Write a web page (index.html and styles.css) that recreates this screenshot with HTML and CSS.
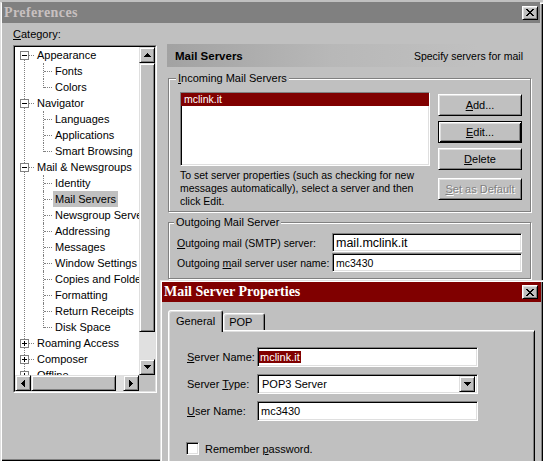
FILE: index.html
```html
<!DOCTYPE html>
<html lang="en">
<head>
    <meta charset="UTF-8">
    <title>Preferences</title>
    <link rel="stylesheet" href="styles.css">
</head>
<body>
    <div class="window">
        <!-- Title bar (inactive) -->
        <div class="titlebar inactive">
            <span class="title">Preferences</span>
            <span class="close-btn">
                <svg width="8" height="7" viewBox="0 0 8 7" shape-rendering="crispEdges"><path d="M0 0h2v1h-2z M6 0h2v1h-2z M1 1h2v1h-2z M5 1h2v1h-2z M2 2h4v1h-4z M3 3h2v1h-2z M2 4h4v1h-4z M1 5h2v1h-2z M5 5h2v1h-2z M0 6h2v1h-2z M6 6h2v1h-2z"/></svg>
            </span>
        </div>

        <div class="main">
            <!-- Category tree -->
            <div class="left-pane">
                <div class="cat-label"><u>C</u>ategory:</div>
                <div class="tree-box">
                    <div class="tree-inner">
                        <div class="tree-view">
                            <div class="tree">
                                <ul class="tree-list">
                                    <li>
                                        <div class="row"><i class="exp"></i><span class="lbl">Appearance</span></div>
                                        <ul class="kids">
                                            <li><span class="lbl">Fonts</span></li>
                                            <li><span class="lbl">Colors</span></li>
                                        </ul>
                                    </li>
                                    <li>
                                        <div class="row"><i class="exp"></i><span class="lbl">Navigator</span></div>
                                        <ul class="kids">
                                            <li><span class="lbl">Languages</span></li>
                                            <li><span class="lbl">Applications</span></li>
                                            <li><span class="lbl">Smart Browsing</span></li>
                                        </ul>
                                    </li>
                                    <li>
                                        <div class="row"><i class="exp"></i><span class="lbl">Mail &amp; Newsgroups</span></div>
                                        <ul class="kids">
                                            <li><span class="lbl">Identity</span></li>
                                            <li><span class="lbl selected">Mail Servers</span></li>
                                            <li><span class="lbl">Newsgroup Servers</span></li>
                                            <li><span class="lbl">Addressing</span></li>
                                            <li><span class="lbl">Messages</span></li>
                                            <li><span class="lbl">Window Settings</span></li>
                                            <li><span class="lbl">Copies and Folders</span></li>
                                            <li><span class="lbl">Formatting</span></li>
                                            <li><span class="lbl">Return Receipts</span></li>
                                            <li><span class="lbl">Disk Space</span></li>
                                        </ul>
                                    </li>
                                    <li><div class="row"><i class="exp plus"></i><span class="lbl">Roaming Access</span></div></li>
                                    <li><div class="row"><i class="exp plus"></i><span class="lbl">Composer</span></div></li>
                                    <li><div class="row"><i class="exp plus"></i><span class="lbl">Offline</span></div></li>
                                    <li><div class="row"><i class="exp plus"></i><span class="lbl">Advanced</span></div></li>
                                </ul>
                            </div>
                            <div class="vscroll">
                                <div class="sb-btn raised">
                                    <svg width="7" height="4" viewBox="0 0 7 4" shape-rendering="crispEdges"><path d="M3 0h1v1h1v1h1v1h1v1H0V3h1V2h1V1h1z"/></svg>
                                </div>
                                <div class="sb-thumb v raised"></div>
                                <div class="sb-track"></div>
                                <div class="sb-btn raised">
                                    <svg width="7" height="4" viewBox="0 0 7 4" shape-rendering="crispEdges"><path d="M0 0h7v1h-1v1h-1v1h-1v1h-1v-1h-1v-1h-1v-1h-1z"/></svg>
                                </div>
                            </div>
                        </div>
                        <div class="hscroll-row">
                            <div class="hscroll">
                                <div class="sb-btn raised">
                                    <svg width="4" height="7" viewBox="0 0 4 7" shape-rendering="crispEdges"><path d="M3 0h1v7h-1v-1h-1v-1h-1v-1h-1v-1h1v-1h1v-1h1z"/></svg>
                                </div>
                                <div class="sb-thumb h raised"></div>
                                <div class="sb-track"></div>
                                <div class="sb-btn raised">
                                    <svg width="4" height="7" viewBox="0 0 4 7" shape-rendering="crispEdges"><path d="M0 0h1v1h1v1h1v1h1v1h-1v1h-1v1h-1v1h-1z"/></svg>
                                </div>
                            </div>
                            <div class="sb-corner"></div>
                        </div>
                    </div>
                </div>
            </div>

            <!-- Mail servers panel -->
            <div class="right-pane">
                <div class="panel-head">
                    <b>Mail Servers</b>
                    <span>Specify servers for mail</span>
                </div>

                <fieldset class="group incoming">
                    <legend><u>I</u>ncoming Mail Servers</legend>
                    <div class="incoming-body">
                        <div class="list-col">
                            <div class="listbox">
                                <div class="list-item selected">mclink.it</div>
                            </div>
                            <p class="hint">To set server properties (such as checking for new<br>messages automatically), select a server and then<br>click Edit.</p>
                        </div>
                        <div class="btn-col">
                            <button class="btn"><u>A</u>dd...</button>
                            <button class="btn default"><u>E</u>dit...</button>
                            <button class="btn"><u>D</u>elete</button>
                            <button class="btn disabled set-default"><u>S</u>et as Default</button>
                        </div>
                    </div>
                </fieldset>

                <fieldset class="group outgoing">
                    <legend>Outgoing Mail Server</legend>
                    <div class="form-grid">
                        <label><u>O</u>utgoing mail (SMTP) server:</label>
                        <div class="field big">mail.mclink.it</div>
                        <label>Outgoing <u>m</u>ail server user name:</label>
                        <div class="field">mc3430</div>
                    </div>
                </fieldset>
            </div>
        </div>
    </div>

    <!-- Mail Server Properties dialog -->
    <div class="dialog">
        <div class="titlebar active">
            <span class="title">Mail Server Properties</span>
            <span class="close-btn">
                <svg width="8" height="7" viewBox="0 0 8 7" shape-rendering="crispEdges"><path d="M0 0h2v1h-2z M6 0h2v1h-2z M1 1h2v1h-2z M5 1h2v1h-2z M2 2h4v1h-4z M3 3h2v1h-2z M2 4h4v1h-4z M1 5h2v1h-2z M5 5h2v1h-2z M0 6h2v1h-2z M6 6h2v1h-2z"/></svg>
            </span>
        </div>
        <div class="dialog-body">
            <div class="tabs">
                <div class="tab active">General</div>
                <div class="tab pop">POP</div>
            </div>
            <div class="tab-panel">
                <div class="props-grid">
                    <label><u>S</u>erver Name:</label>
                    <div class="field name"><span class="hl">mclink.it</span></div>
                    <label>Server <u>T</u>ype:</label>
                    <div class="field select">
                        <span>POP3 Server</span>
                        <span class="drop-btn raised">
                            <svg width="7" height="4" viewBox="0 0 7 4" shape-rendering="crispEdges"><path d="M0 0h7v1h-1v1h-1v1h-1v1h-1v-1h-1v-1h-1v-1h-1z"/></svg>
                        </span>
                    </div>
                    <label><u>U</u>ser Name:</label>
                    <div class="field">mc3430</div>
                </div>
                <div class="check-row">
                    <span class="checkbox"></span>
                    <span>Remember <u>p</u>assword.</span>
                </div>
            </div>
        </div>
    </div>
</body>
</html>
```

FILE: styles.css
```css
* {
    margin: 0;
    padding: 0;
    box-sizing: border-box;
}

html, body {
    overflow: hidden;
}

body {
    width: 543px;
    height: 461px;
    position: relative;
    background-color: #c0c0c0;
    font-family: 'Liberation Sans', Arial, sans-serif;
    font-size: 10.5px;
    color: #000;
}

label {
    white-space: nowrap;
}

/* Shared 3D bits */
.raised {
    background-color: #c0c0c0;
    border: 1px solid;
    border-color: #dfdfdf #000 #000 #dfdfdf;
    box-shadow: inset 1px 1px #fff, inset -1px -1px #808080;
}

.window {
    width: 543px;
    height: 459px;
    box-shadow: inset 1px 1px #dfdfdf, inset 2px 2px #fff, inset -1px -1px #000, inset -2px -2px #808080;
}

/* Title bars */
.titlebar {
    display: flex;
    align-items: center;
    justify-content: space-between;
    height: 21px;
    margin: 2px 3px 0 2px;
    padding: 0 2px 0 2px;
    background-color: #808080;
}

.titlebar .title {
    font-family: 'Liberation Serif', serif;
    font-weight: bold;
    font-size: 14px;
    letter-spacing: 0.4px;
    color: #c8c0c0;
}

.close-btn {
    width: 16px;
    height: 14px;
    display: flex;
    align-items: center;
    justify-content: center;
    background-color: #c0c0c0;
    border: 1px solid;
    border-color: #fff #000 #000 #fff;
    box-shadow: inset 1px 1px #dfdfdf, inset -1px -1px #808080;
}

.main {
    display: flex;
    height: 436px;
}

/* Left pane - category tree */
.left-pane {
    width: 158px;
    padding: 4px 0 0 13px;
}

.cat-label {
    height: 14px;
    line-height: 14px;
    margin-bottom: 4px;
    font-size: 11px;
}

.tree-box {
    width: 144px;
    border: 1px solid;
    border-color: #808080 #fff #fff #808080;
}

.tree-inner {
    border: 1px solid;
    border-color: #000 #dfdfdf #dfdfdf #000;
}

.tree-view {
    display: flex;
    height: 328px;
}

.tree {
    width: 124px;
    overflow: hidden;
    background-color: #fff;
    white-space: nowrap;
    font-size: 11px;
}

.tree-list {
    list-style: none;
    position: relative;
}

/* dotted trunk line joining the top level boxes */
.tree-list::before {
    content: '';
    position: absolute;
    left: 9px;
    top: 8px;
    bottom: 0;
    border-left: 1px dotted #808080;
}

.row {
    display: flex;
    align-items: center;
    height: 16px;
    position: relative;
}

.row::after {
    content: '';
    position: absolute;
    left: 14px;
    top: 8px;
    width: 5px;
    border-top: 1px dotted #808080;
}

.exp {
    width: 9px;
    height: 9px;
    margin-left: 5px;
    border: 1px solid #808080;
    background-color: #fff;
    position: relative;
    z-index: 1;
}

.exp::before {
    content: '';
    position: absolute;
    left: 1px;
    top: 3px;
    width: 5px;
    height: 1px;
    background-color: #000;
}

.exp.plus::after {
    content: '';
    position: absolute;
    left: 3px;
    top: 1px;
    width: 1px;
    height: 5px;
    background-color: #000;
}

.lbl {
    padding: 0 2px;
    line-height: 16px;
}

.row .lbl {
    margin-left: 6px;
}

.lbl.selected {
    background-color: #c0c0c0;
}

.kids {
    list-style: none;
    padding-left: 28px;
}

.kids li {
    height: 16px;
    display: flex;
    align-items: center;
    padding-left: 10px;
    position: relative;
}

.kids li::before {
    content: '';
    position: absolute;
    left: 0;
    top: 0;
    height: 16px;
    border-left: 1px dotted #808080;
}

.kids li:last-child::before {
    height: 9px;
}

.kids li::after {
    content: '';
    position: absolute;
    left: 1px;
    top: 8px;
    width: 8px;
    border-top: 1px dotted #808080;
}

/* Scrollbars */
.vscroll {
    width: 16px;
    display: flex;
    flex-direction: column;
}

.sb-btn {
    width: 16px;
    height: 16px;
    flex: none;
    display: flex;
    align-items: center;
    justify-content: center;
}

.sb-thumb.v {
    height: 269px;
    flex: none;
}

.sb-thumb.h {
    width: 85px;
    flex: none;
}

.sb-track {
    flex: 1;
    background-color: #e0e0e0;
}

.hscroll-row {
    display: flex;
    height: 16px;
}

.hscroll {
    width: 124px;
    display: flex;
}

.sb-corner {
    width: 16px;
    background-color: #c0c0c0;
}

/* Right pane */
.right-pane {
    flex: 1;
    padding: 21px 10px 0 9px;
}

.panel-head {
    height: 23px;
    display: flex;
    align-items: center;
    justify-content: space-between;
    padding: 0 10px 0 8px;
    background: linear-gradient(to right, #a2a2a2, #b8b8b8 45%, #c0c0c0 85%);
}

.panel-head b {
    font-size: 11.5px;
}

.group {
    margin: 4px 2px 0 1px;
    padding: 7px 8px 3px 11px;
    border: 1px solid #808080;
    box-shadow: 1px 1px 0 #fff, inset 1px 1px 0 #fff;
    min-width: 0;
}

.group legend {
    padding: 0 2px;
    margin-left: -4px;
    line-height: 14px;
    font-size: 11px;
    background-color: #c0c0c0;
}

.incoming-body {
    display: grid;
    grid-template-columns: 250px 84px;
    column-gap: 8px;
}

.listbox {
    height: 74px;
    background-color: #fff;
    border: 1px solid;
    border-color: #808080 #fff #fff #808080;
    box-shadow: inset 1px 1px #000, inset -1px -1px #dfdfdf;
}

.list-item {
    height: 13px;
    line-height: 13px;
    padding-left: 3px;
}

.list-item.selected {
    background-color: #800000;
    color: #fff;
}

.hint {
    margin-top: 3px;
    line-height: 13px;
}

.btn-col {
    display: flex;
    flex-direction: column;
    gap: 5px;
    padding-top: 2px;
}

.btn {
    height: 22px;
    font-family: inherit;
    font-size: 11px;
    color: #000;
    background-color: #c0c0c0;
    border: 1px solid;
    border-color: #fff #000 #000 #fff;
    box-shadow: inset 1px 1px #dfdfdf, inset -1px -1px #808080;
}

.btn.default {
    border-color: #000;
    box-shadow: inset 1px 1px #fff, inset -1px -1px #000, inset 2px 2px #dfdfdf, inset -2px -2px #808080;
}

.btn.disabled {
    color: #808080;
    text-shadow: 1px 1px #fff;
}

.set-default {
    margin-top: 3px;
}

.group.outgoing {
    margin-top: 3px;
    padding: 4px 8px 6px 8px;
}

.outgoing legend {
    margin-left: -3px;
}

.form-grid {
    display: grid;
    grid-template-columns: 155px 190px;
    row-gap: 1px;
    align-items: center;
}

.field {
    height: 19px;
    display: flex;
    align-items: center;
    padding: 0 3px;
    white-space: nowrap;
    background-color: #fff;
    border: 1px solid;
    border-color: #808080 #fff #fff #808080;
    box-shadow: inset 1px 1px #000, inset -1px -1px #dfdfdf;
}

.field.big {
    font-size: 12.5px;
}

/* Dialog */
.dialog {
    position: absolute;
    left: 160px;
    top: 280px;
    width: 383px;
    height: 190px;
    padding: 2px;
    background-color: #c0c0c0;
    box-shadow: inset 1px 1px #dfdfdf, inset 2px 2px #fff, inset -1px -1px #000, inset -2px -2px #808080;
}

.titlebar.active {
    margin: 0;
    height: 20px;
    padding: 0 3px 0 2px;
    background-color: #800000;
}

.titlebar.active .title {
    color: #fff;
    letter-spacing: 0;
}

.dialog-body {
    padding: 8px 6px 0 6px;
    font-size: 11px;
}

.tabs {
    display: flex;
    align-items: flex-end;
    height: 20px;
}

.tab {
    height: 17px;
    display: flex;
    align-items: center;
    padding: 0 6px;
    background-color: #c0c0c0;
    border: 1px solid;
    border-bottom: none;
    border-color: #fff #000 transparent #fff;
    border-radius: 3px 3px 0 0;
    box-shadow: inset 1px 1px #dfdfdf, inset -1px 0 #808080;
}

.tab.active {
    height: 22px;
    margin-bottom: -2px;
    padding: 0 7px 2px 7px;
    position: relative;
    z-index: 1;
}

.tab.pop {
    width: 42px;
    padding-left: 5px;
}

.tab-panel {
    width: 367px;
    height: 140px;
    border: 1px solid;
    border-bottom: none;
    border-color: #fff #000 transparent #fff;
    box-shadow: inset 1px 1px #dfdfdf, inset -1px 0 #808080;
    padding: 16px 0 0 18px;
}

.props-grid {
    display: grid;
    grid-template-columns: 70px 221px;
    row-gap: 7px;
    align-items: center;
}

.props-grid .field {
    height: 20px;
}

.field.name {
    padding-left: 1px;
}

.hl {
    background-color: #800000;
    color: #fff;
    line-height: 12px;
    padding: 0 1px;
}

.field.select {
    justify-content: space-between;
    padding: 0 2px 0 4px;
}

.drop-btn {
    width: 16px;
    height: 16px;
    display: flex;
    align-items: center;
    justify-content: center;
}

.check-row {
    display: flex;
    align-items: center;
    gap: 6px;
    margin-top: 21px;
    margin-left: -1px;
}

.checkbox {
    width: 13px;
    height: 13px;
    background-color: #fff;
    border: 1px solid;
    border-color: #808080 #fff #fff #808080;
    box-shadow: inset 1px 1px #000, inset -1px -1px #dfdfdf;
}
```
